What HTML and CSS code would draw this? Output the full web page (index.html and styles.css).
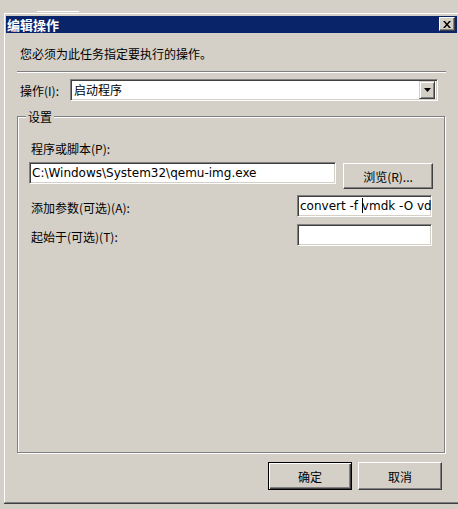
FILE: index.html
```html
<!DOCTYPE html>
<html lang="zh-CN">
<head>
<meta charset="utf-8">
<title>编辑操作</title>
<link rel="stylesheet" href="styles.css">
</head>
<body>
<div class="desk">
  <div class="behind-line"></div>
  <div class="win">
    <div class="titlebar">
      <span class="title">编辑操作</span>
      <button class="close" aria-label="关闭">
        <svg width="8" height="7" viewBox="0 0 8 7"><path d="M0 0h2l2 2.5L6 0h2L5 3.5 8 7H6L4 4.5 2 7H0l3-3.5z" fill="#000"/></svg>
      </button>
    </div>
    <div class="content">
      <p class="intro">您必须为此任务指定要执行的操作。</p>
      <div class="sep"></div>
      <div class="action-row">
        <span class="label action-label">操作(I):</span>
        <div class="combo">
          <span class="combo-text">启动程序</span>
          <span class="drop">
            <svg width="7" height="4" viewBox="0 0 7 4"><path d="M0 0h7L3.5 4z" fill="#000"/></svg>
          </span>
        </div>
      </div>
      <div class="group">
        <span class="legend">设置</span>
        <div class="label prog-label">程序或脚本(P):</div>
        <div class="prog-row">
          <div class="field wide">C:\Windows\System32\qemu-img.exe</div>
          <button class="btn browse">浏览(R)...</button>
        </div>
        <div class="opt-row">
          <span class="label">添加参数(可选)(A):</span>
          <div class="field narrow">convert -f <span class="caret"></span>vmdk -O vd</div>
        </div>
        <div class="opt-row">
          <span class="label">起始于(可选)(T):</span>
          <div class="field narrow"></div>
        </div>
      </div>
      <div class="buttons">
        <button class="btn default">确定</button>
        <button class="btn">取消</button>
      </div>
    </div>
  </div>
</div>
</body>
</html>
```

FILE: styles.css
```css
* { box-sizing: border-box; }
html, body { margin: 0; padding: 0; }
body {
  background: #d4d0c8;
  font-family: "Noto Sans CJK SC", "DejaVu Sans", sans-serif;
  font-size: 12px;
  color: #000;
}
.desk {
  position: relative;
  width: 458px;
  height: 509px;
  overflow: hidden;
  padding-top: 13px;
}
.behind-line {
  position: absolute;
  left: 37px;
  top: 11px;
  width: 42px;
  height: 1px;
  background: #fff;
}
.win {
  margin-left: 4px;
  width: 460px;
  height: 490px;
  border-top: 1px solid #fff;
  border-left: 1px solid #fff;
  border-bottom: 1px solid #808080;
  box-shadow: 0 1px 0 #404040;
  padding: 2px 0 0 1px;
}
.titlebar {
  width: 451px;
  height: 17px;
  background: #0a246a;
  display: flex;
  align-items: flex-start;
  justify-content: space-between;
}
.title {
  color: #fff;
  font-weight: bold;
  font-size: 13px;
  line-height: 17px;
  padding-left: 1px;
}
.close {
  margin: 1px 2px 0 0;
  width: 16px;
  height: 14px;
  padding: 0;
  background: #d4d0c8;
  border: 1px solid;
  border-color: #fff #404040 #404040 #fff;
  box-shadow: inset -1px -1px 0 #808080;
  display: flex;
  align-items: center;
  justify-content: center;
}
.content {
  padding: 14px 0 0 11px;
  width: 440px;
}
.intro {
  margin: 0 0 0 3px;
  line-height: 14px;
}
.sep {
  margin-top: 10px;
  width: 429px;
  height: 2px;
  border-top: 1px solid #808080;
  border-bottom: 1px solid #fff;
}
.action-row {
  margin-top: 6px;
  display: flex;
  align-items: center;
  padding-left: 3px;
}
.action-label { width: 50px; padding-top: 2px; }
.combo {
  width: 368px;
  height: 22px;
  background: #fff;
  border: 1px solid;
  border-color: #808080 #fff #fff #808080;
  box-shadow: inset 1px 1px 0 #404040, inset -1px -1px 0 #d4d0c8;
  display: flex;
  align-items: center;
  justify-content: space-between;
  padding: 2px 2px 2px 3px;
}
.combo-text { line-height: 16px; }
.drop {
  width: 16px;
  height: 18px;
  background: #d4d0c8;
  border: 1px solid;
  border-color: #d4d0c8 #404040 #404040 #d4d0c8;
  box-shadow: inset 1px 1px 0 #fff, inset -1px -1px 0 #808080;
  display: flex;
  align-items: center;
  justify-content: center;
}
.group {
  position: relative;
  margin-top: 15px;
  width: 428px;
  height: 337px;
  border: 1px solid #808080;
  box-shadow: 1px 1px 0 #fff, inset 1px 1px 0 #fff;
  padding: 25px 0 0 11px;
}
.legend {
  position: absolute;
  left: 8px;
  top: -7px;
  padding: 0 2px;
  background: #d4d0c8;
  line-height: 14px;
}
.label { line-height: 14px; white-space: nowrap; }
.prog-label { margin-left: 2px; }
.prog-row {
  margin-top: 6px;
  display: flex;
  align-items: flex-start;
  gap: 7px;
}
.field {
  height: 22px;
  background: #fff;
  border: 1px solid;
  border-color: #808080 #fff #fff #808080;
  box-shadow: inset 1px 1px 0 #404040, inset -1px -1px 0 #d4d0c8;
  font-family: "DejaVu Sans", sans-serif;
  font-size: 12px;
  line-height: 20px;
  padding: 0 1px 0 2px;
  white-space: nowrap;
  overflow: hidden;
}
.wide { width: 307px; }
.narrow { width: 135px; }
.caret {
  display: inline-block;
  width: 1px;
  height: 15px;
  background: #000;
  vertical-align: -3px;
  margin-right: -1px;
}
.btn {
  font-family: "Noto Sans CJK SC", "DejaVu Sans", sans-serif;
  font-size: 12px;
  color: #000;
  background: #d4d0c8;
  border: 1px solid;
  border-color: #fff #404040 #404040 #fff;
  box-shadow: inset -1px -1px 0 #808080;
  padding: 0;
}
.browse {
  margin-top: 1px;
  width: 90px;
  height: 26px;
}
.opt-row {
  display: flex;
  align-items: center;
  justify-content: space-between;
  width: 403px;
}
.opt-row .label { padding: 3px 0 0 2px; }
.prog-row + .opt-row { margin-top: 6px; }
.opt-row + .opt-row { margin-top: 7px; }
.buttons {
  margin-top: 9px;
  width: 429px;
  display: flex;
  justify-content: flex-end;
  gap: 6px;
  padding-right: 4px;
}
.buttons .btn {
  width: 84px;
  height: 28px;
}
.buttons .default {
  border: 1px solid #000;
  box-shadow: inset 1px 1px 0 #fff, inset -1px -1px 0 #404040, inset -2px -2px 0 #808080;
}
```
